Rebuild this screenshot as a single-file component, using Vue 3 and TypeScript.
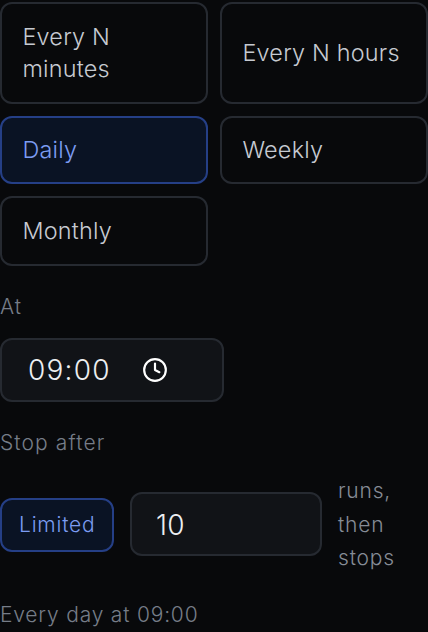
<script setup lang="ts">
const options = [
  { label: 'Every N minutes', active: false },
  { label: 'Every N hours', active: false },
  { label: 'Daily', active: true },
  { label: 'Weekly', active: false },
  { label: 'Monthly', active: false },
]
</script>

<template>
  <main class="page">
    <div class="grid">
      <button v-for="o in options" :key="o.label" class="opt" :class="{ active: o.active }">{{ o.label }}</button>
    </div>
    <div class="label at">At</div>
    <div class="time">
      <span class="time-val">09:00</span>
      <svg class="clock" viewBox="0 0 24 24" fill="none" stroke="currentColor" stroke-width="2" stroke-linecap="round" stroke-linejoin="round">
        <circle cx="12" cy="12" r="10" />
        <path d="M12 6v6l4 2" />
      </svg>
    </div>
    <div class="label stop">Stop after</div>
    <div class="limit-row">
      <button class="opt active limited">Limited</button>
      <div class="num">10</div>
      <div class="runs">runs, then stops</div>
    </div>
    <div class="label summary">Every day at 09:00</div>
  </main>
</template>

<style scoped>
.page {
  box-sizing: border-box;
  width: 428px;
  height: 632px;
  overflow: hidden;
  padding-top: 2px;
  background: #08090b;
  font-family: Inter, "Liberation Sans", sans-serif;
  font-weight: 350;
}
.grid {
  display: grid;
  grid-template-columns: 208px 208px;
  grid-template-rows: 102px 68px 70px;
  gap: 12px;
}
.opt {
  box-sizing: border-box;
  padding: 0 20px 1px 20.5px;
  border: 2px solid #262a31;
  border-radius: 12px;
  background: #08090b;
  color: #c6cad1;
  font: 350 23.4px/32px Inter, "Liberation Sans", sans-serif;
  letter-spacing: 0.2px;
  text-align: left;
}
.opt.active {
  border-color: #253f86;
  background: #0a1324;
  color: #7c9cf2;
}
.label {
  color: #767d88;
  font-size: 21px;
  line-height: 28px;
  letter-spacing: 0.8px;
}
.at { margin-top: 27px; }
.time {
  box-sizing: border-box;
  display: flex;
  align-items: center;
  gap: 31px;
  width: 224px;
  height: 64px;
  margin-top: 17px;
  padding-left: 26px;
  border: 2px solid #262a31;
  border-radius: 12px;
  background: #111317;
  color: #eceef1;
  font-size: 28px;
  letter-spacing: 1.2px;
}
.clock { width: 26px; height: 26px; color: #fff; }
.stop { margin-top: 27px; letter-spacing: 1.1px; }
.limit-row {
  display: flex;
  align-items: center;
  gap: 16px;
  margin-top: 17px;
}
.limited {
  width: 114px;
  margin-top: 2px;
  padding: 10px 0 10px 17px;
  font-size: 21px;
  line-height: 30px;
  letter-spacing: 0.8px;
}
.num {
  box-sizing: border-box;
  display: flex;
  align-items: center;
  width: 192px;
  height: 64px;
  padding: 2px 0 0 24px;
  border: 2px solid #262a31;
  border-radius: 12px;
  background: #111317;
  color: #eceef1;
  font-size: 28px;
  letter-spacing: 0.3px;
}
.runs {
  width: 80px;
  color: #868c96;
  font-size: 21px;
  line-height: 33.5px;
  letter-spacing: 0.8px;
}
.summary {
  margin-top: 26px;
}
</style>
